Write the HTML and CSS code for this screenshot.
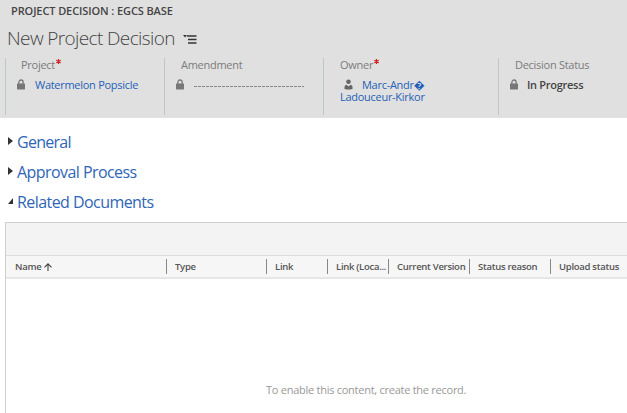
FILE: index.html
```html
<!DOCTYPE html>
<html lang="en">
<head>
<meta charset="utf-8">
<title>New Project Decision</title>
<link rel="stylesheet" href="styles.css">
</head>
<body>
<svg class="symbols" aria-hidden="true">
  <symbol id="lock" viewBox="0 0 8 11"><path d="M1.900 5V3.100a2.100 2.100 0 0 1 4.200 0V5" fill="none" stroke="#777" stroke-width="1.300"/><rect y="4.600" width="8" height="5.900" rx=".4" fill="#777"/></symbol>
</svg>
<header class="record-header">
  <div class="entity"><span>PROJECT DECISION : EGCS BASE</span></div>
  <div class="title-row">
    <h1>New Project Decision</h1>
    <svg class="form-menu" width="14" height="9" viewBox="0 0 14 9"><path d="M0 0h4L2 2.500z" fill="#333"/><path d="M4 1h9.500M5 4.500h8.500M5 8h8.500" stroke="#333" stroke-width="1.500"/></svg>
  </div>
  <div class="fields">
    <section class="field project">
      <div class="label">Project<svg class="required" width="5" height="5" viewBox="0 0 5 5"><path d="M2.500 0v5M.3 1.200l4.400 2.600M4.700 1.200L.3 3.800" stroke="#d02020" stroke-width="1.200"/></svg></div>
      <div class="value"><svg class="lock" width="8" height="11"><use href="#lock"/></svg><a>Watermelon Popsicle</a></div>
    </section>
    <section class="field amendment">
      <div class="label">Amendment</div>
      <div class="value"><svg class="lock" width="8" height="11"><use href="#lock"/></svg><span class="empty"></span></div>
    </section>
    <section class="field owner">
      <div class="label">Owner<svg class="required" width="5" height="5" viewBox="0 0 5 5"><path d="M2.500 0v5M.3 1.200l4.400 2.600M4.700 1.200L.3 3.800" stroke="#d02020" stroke-width="1.200"/></svg></div>
      <div class="value"><svg class="person" width="9" height="11" viewBox="0 0 9 11"><circle cx="4.500" cy="2.800" r="2.300" fill="#666"/><path d="M.5 10V8q0-2 2-2.300L4.500 7.500l2-1.800q2 .3 2 2.300v2q-4 1-8 0z" fill="#666"/></svg><a>Marc-Andr�</a></div>
      <a class="owner-last">Ladouceur-Kirkor</a>
    </section>
    <section class="field status">
      <div class="label">Decision Status</div>
      <div class="value"><svg class="lock" width="8" height="11"><use href="#lock"/></svg><span class="status-value">In Progress</span></div>
    </section>
  </div>
</header>
<main>
  <nav class="sections">
    <h2><svg width="5" height="8" viewBox="0 0 5 8"><path d="M0 0l5 4-5 4z" fill="#333"/></svg><span class="general">General</span></h2>
    <h2><svg width="5" height="8" viewBox="0 0 5 8"><path d="M0 0l5 4-5 4z" fill="#333"/></svg><span>Approval Process</span></h2>
    <h2><svg width="5" height="8" viewBox="0 0 5 8"><path d="M5 1v6H0z" fill="#333"/></svg><span>Related Documents</span></h2>
  </nav>
  <div class="grid">
    <div class="toolbar"></div>
    <div class="columns">
      <div><span>Name</span><svg class="sort" width="8" height="8" viewBox="0 0 8 8"><path d="M4 8V1M.5 4.300L4 .8l3.500 3.500" fill="none" stroke="#444" stroke-width="1.100"/></svg></div>
      <div><span>Type</span></div>
      <div><span>Link</span></div>
      <div><span>Link (Loca...</span></div>
      <div><span>Current Version</span></div>
      <div><span>Status reason</span></div>
      <div><span>Upload status</span></div>
    </div>
    <div class="empty-grid"><span>To enable this content, create the record.</span></div>
  </div>
</main>
</body>
</html>
```
FILE: styles.css
```css
* { box-sizing: border-box; }
body { margin: 0; width: 627px; height: 413px; overflow: hidden; background: #fff; font-family: "Open Sans", "Noto Sans", sans-serif; font-size: 11px; color: #444; }
svg { display: block; flex: none; }
.symbols { display: none; }
a { color: #2560b8; }
.record-header { height: 118px; background: #e0e0e0; }
.entity { height: 24px; padding-left: 11px; line-height: 21px; font-size: 11px; letter-spacing: -.1px; font-weight: 600; white-space: nowrap; }
.title-row { display: flex; height: 34px; padding-left: 7px; }
h1 { margin: 0; width: 176px; font-size: 19px; letter-spacing: -.62px; font-weight: 300; line-height: 28px; white-space: nowrap; color: #444; }
.form-menu { margin-top: 11px; }
.fields { display: grid; grid-template-columns: 159px 159px 175px 129px; height: 57px; padding-left: 5px; letter-spacing: -.28px; }
.field { border-left: 1px solid #bdc6c9; padding-left: 16px; white-space: nowrap; }
.project .label { margin-left: -1px; }
.label { display: flex; height: 18px; line-height: 14px; color: #7c7c7c; }
.required { margin: 1px 0 0 1px; }
.value { display: flex; height: 16px; line-height: 18px; }
.lock { margin: 3px 10px 0 -5px; }
.empty { width: 110px; height: 11px; background: repeating-linear-gradient(90deg, #888 0 3px, #dcdcdc 3px 4px) 0 10px / 100% 1px no-repeat; }
.owner .value { margin-top: 3px; height: 12px; line-height: 12px; }
.person { margin: 0 9px 0 4px; }
.owner-last { display: block; line-height: 12px; }
.status .lock { margin-right: 9px; }
.status-value { font-weight: 600; }
.sections { height: 104px; padding: 9px 0 0 8px; }
h2 { display: flex; align-items: center; margin: 0; height: 30px; font-size: 16px; letter-spacing: -.56px; font-weight: 400; line-height: 30px; color: #2f66b7; white-space: nowrap; }
h2 svg { margin: 0 4px 2px 0; }
.general { letter-spacing: -.72px; }
.grid { margin-left: 5px; height: 191px; border: solid #ccd0d1; border-width: 1px 0 0 1px; }
.toolbar { height: 33px; background: #f3f3f3; border-bottom: 1px solid #dedede; }
.columns { display: grid; grid-template-columns: 160px 100px 61px 61px 81px 81px 77px; align-items: center; height: 23px; background: #f6f6f6; border-bottom: 2px solid #e6e6e6; font-size: 9.5px; letter-spacing: -.28px; font-weight: 600; white-space: nowrap; color: #555; }
.columns > div { display: flex; align-items: center; height: 15px; padding-left: 8px; border-left: 1px solid #888; }
.columns > div:first-child { border-left: 0; padding-left: 9px; }
.sort { margin-left: 3px; }
.empty-grid { padding: 103px 0 0 260px; letter-spacing: -.26px; color: #999; line-height: 15px; }
```
